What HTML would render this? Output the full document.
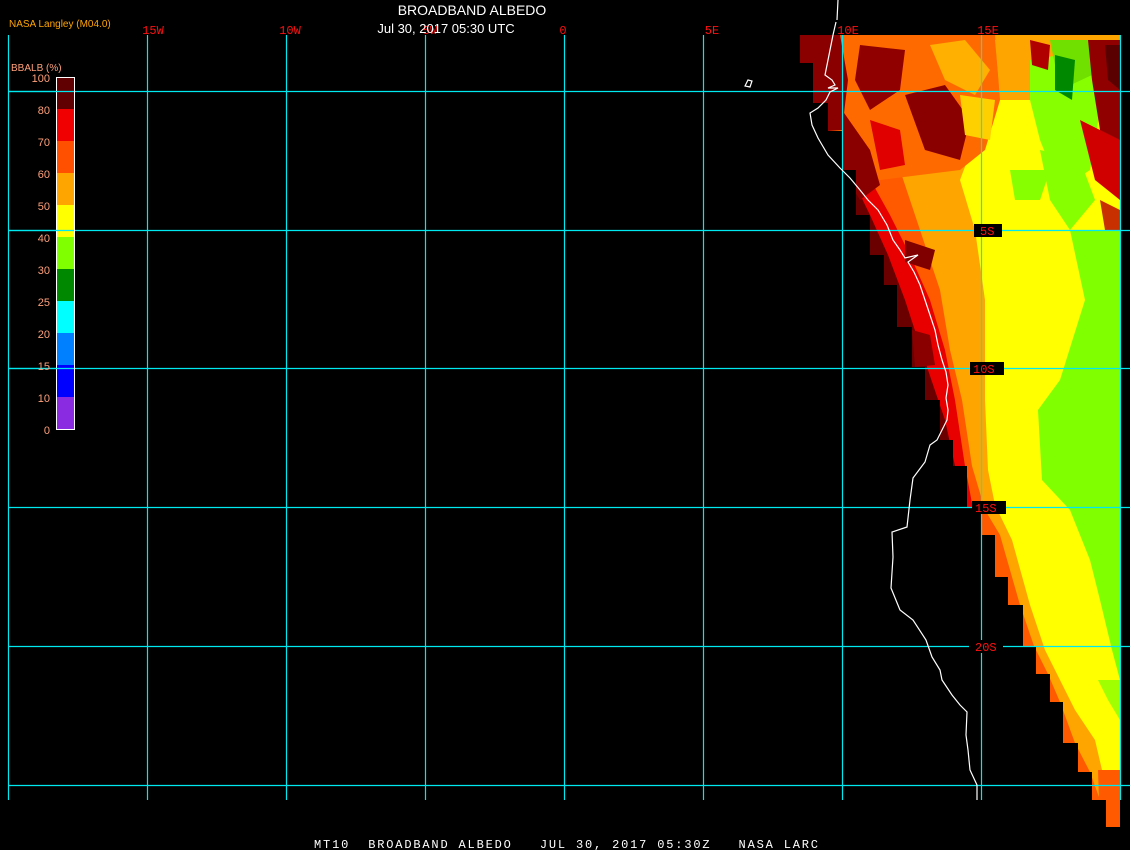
<!DOCTYPE html>
<html><head><meta charset="utf-8"><style>
html,body{margin:0;padding:0;background:#000;width:1130px;height:850px;overflow:hidden}
svg{display:block}
text{font-family:"Liberation Sans",sans-serif}
.m{font-family:"Liberation Mono",monospace}
</style></head><body>
<svg width="1130" height="850" viewBox="0 0 1130 850" xmlns="http://www.w3.org/2000/svg">
<defs>
<clipPath id="land"><path d="M800,35 L1120,35 L1120,827 L1106,827 L1106,800 L1092,800 L1092,772 L1078,772 L1078,743 L1063,743 L1063,702 L1050,702 L1050,674 L1036,674 L1036,646 L1023,646 L1023,605 L1008,605 L1008,577 L995,577 L995,535 L982,535 L982,507 L967,507 L967,466 L953,466 L953,440 L940,440 L940,400 L925,400 L925,367 L912,367 L912,327 L897,327 L897,285 L884,285 L884,255 L870,255 L870,215 L856,215 L856,170 L842,170 L842,131 L828,131 L828,103 L813,103 L813,63 L800,63 Z"/></clipPath>
</defs>
<g clip-path="url(#land)">
<rect x="790" y="30" width="340" height="800" fill="#6a0000"/>
<!-- red -->
<path d="M815,35 L830,110 L848,170 L870,215 L888,255 L905,300 L918,340 L928,370 L945,420 L955,466 L966,507 L960,850 L1130,850 L1130,35Z" fill="#e80000"/>
<!-- orange -->
<path d="M840,35 L845,100 L865,170 L890,215 L910,255 L930,300 L945,350 L955,400 L965,466 L978,535 L978,850 L1130,850 L1130,35Z" fill="#ff5a00"/>
<!-- amber -->
<path d="M880,35 L885,110 L900,170 L920,230 L940,290 L950,350 L962,400 L972,466 L985,510 L1000,535 L1012,577 L1020,605 L1034,646 L1048,674 L1060,702 L1075,743 L1090,772 L1100,800 L1130,800 L1130,35Z" fill="#ffa500"/>
<!-- yellow -->
<path d="M990,100 L960,180 L975,230 L985,300 L985,400 L988,470 L995,505 L1012,540 L1030,605 L1045,650 L1060,680 L1075,710 L1095,740 L1102,770 L1130,770 L1130,100Z" fill="#ffff00"/>
<!-- top mottled -->
<path d="M800,35 L995,35 L1000,100 L985,150 L960,170 L920,175 L880,180 L840,160 L810,110Z" fill="#ff6a00"/>
<path d="M800,35 L840,35 L848,80 L842,130 L828,131 L813,103 L800,63Z" fill="#8a0000"/>
<path d="M842,110 L870,150 L880,185 L860,200 L842,170Z" fill="#8a0000"/>
<path d="M860,45 L905,50 L900,90 L870,110 L855,80Z" fill="#900000"/>
<path d="M905,95 L945,85 L970,120 L960,160 L925,150Z" fill="#8a0000"/>
<path d="M930,45 L965,40 L990,70 L975,95 L945,80Z" fill="#ffb000"/>
<path d="M870,120 L900,130 L905,165 L880,170Z" fill="#e00000"/>
<path d="M960,95 L995,100 L990,140 L965,135Z" fill="#ffd000"/>
<path d="M995,40 L1040,40 L1035,90 L1000,95Z" fill="#ffa500"/>
<path d="M1030,60 L1060,55 L1090,70 L1100,110 L1090,170 L1060,190 L1040,140 L1030,100Z" fill="#88ff00"/>
<path d="M1050,40 L1088,40 L1092,75 L1060,90Z" fill="#70e000"/>
<path d="M1055,55 L1075,60 L1072,100 L1055,90Z" fill="#008800"/>
<path d="M1088,40 L1120,40 L1120,170 L1100,130 L1092,80Z" fill="#900000"/>
<path d="M1105,45 L1120,45 L1120,90 L1108,80Z" fill="#5a0000"/>
<path d="M1030,40 L1050,45 L1048,70 L1032,65Z" fill="#b00000"/>
<path d="M1080,120 L1120,140 L1120,200 L1095,180Z" fill="#d00000"/>
<path d="M1100,200 L1120,210 L1120,280 L1110,260Z" fill="#c83000"/>
<path d="M1040,150 L1080,160 L1095,200 L1070,230 L1050,200Z" fill="#88ff00"/>
<path d="M1010,170 L1050,170 L1040,200 L1015,200Z" fill="#88ff00"/>
<path d="M905,240 L935,250 L930,270 L905,262Z" fill="#800000"/>
<path d="M912,330 L930,335 L935,365 L915,367Z" fill="#8a0000"/>
<!-- greens -->
<path d="M1070,230 L1120,230 L1120,500 L1090,560 L1070,510 L1042,480 L1038,410 L1060,380 L1085,300Z" fill="#80ff00"/>
<path d="M1080,490 L1120,490 L1120,680 L1112,650 L1100,600 L1090,560Z" fill="#80ff00"/>
<path d="M1098,680 L1120,680 L1120,720 L1108,700Z" fill="#a0ff00"/>
<path d="M1098,770 L1120,770 L1120,830 L1100,830Z" fill="#ff5a00"/>
</g>
<!-- grid -->
<g stroke="#00e8f0" stroke-width="1.2" fill="none">
<path d="M8.5,35V800M147.5,35V800M286.5,35V800M425.5,35V800M564.5,35V800M703.5,35V800M842.5,35V800M981.5,35V800M1120.5,35V800"/>
<path d="M8,91.5H1130M8,230.5H1130M8,368.5H1130M8,507.5H1130M8,646.5H1130M8,785.5H1130"/>
</g>
<!-- coastline -->
<g stroke="#fff" stroke-width="1.2" fill="none">
<path d="M838,0 L837,20 M836,22 L833,35 L830,50 L828,60 L825,75 L832,80 L835,85 L828,88 L838,88 L830,92 L826,100 L818,108 L810,113 L812,125 L818,138 L828,155 L840,168 L850,178 L860,190 L868,200 L878,210 L887,225 L893,240 L900,250 L905,258 L918,255 L908,262 L914,272 L920,285 L925,300 L930,315 L935,330 L938,345 L942,360 L946,372 L948,385 L946,398 L948,410 L947,420 L937,440 L930,445 L925,462 L913,478 L910,500 L907,527 L892,532 L893,557 L891,588 L900,610 L913,620 L926,640 L932,657 L940,670 L942,680 L952,695 L960,705 L967,712 L966,735 L968,750 L970,770 L977,785 L977,800"/>
<path d="M745,86 L748,80 L752,81 L750,87 Z"/>
</g>
<!-- colorbar -->
<g>
<rect x="56" y="77" width="18" height="32" fill="#600000"/>
<rect x="56" y="109" width="18" height="32" fill="#f00000"/>
<rect x="56" y="141" width="18" height="32" fill="#ff5000"/>
<rect x="56" y="173" width="18" height="32" fill="#ffa500"/>
<rect x="56" y="205" width="18" height="32" fill="#ffff00"/>
<rect x="56" y="237" width="18" height="32" fill="#80ff00"/>
<rect x="56" y="269" width="18" height="32" fill="#008800"/>
<rect x="56" y="301" width="18" height="32" fill="#00ffff"/>
<rect x="56" y="333" width="18" height="32" fill="#0080ff"/>
<rect x="56" y="365" width="18" height="32" fill="#0000ff"/>
<rect x="56" y="397" width="18" height="32" fill="#8a2be2"/>
<rect x="56.5" y="77.5" width="18" height="352" fill="none" stroke="#fff" stroke-width="1"/>
<path d="M8,91.5H74M8,230.5H74M8,368.5H74" stroke="#00e8f0" stroke-width="1.2"/>
</g>
<g fill="#ffa07a" font-size="11" text-anchor="end">
<text x="50" y="82">100</text><text x="50" y="114">80</text><text x="50" y="146">70</text><text x="50" y="178">60</text><text x="50" y="210">50</text><text x="50" y="242">40</text><text x="50" y="274">30</text><text x="50" y="306">25</text><text x="50" y="338">20</text><text x="50" y="370">15</text><text x="50" y="402">10</text><text x="50" y="434">0</text>
</g>
<text x="11" y="71" fill="#ffa07a" font-size="10">BBALB (%)</text>
<text x="9" y="27" fill="#ffa500" font-size="10">NASA Langley (M04.0)</text>
<g fill="#ff1010" font-size="12" text-anchor="middle">
<text x="153" y="34" class="m">15W</text><text x="290" y="34" class="m">10W</text><text x="430" y="34" class="m">5W</text><text x="563" y="34" class="m">0</text><text x="712" y="34" class="m">5E</text><text x="848" y="34" class="m">10E</text><text x="988" y="34" class="m">15E</text>
</g>
<g font-size="12">
<rect x="974" y="224" width="28" height="13" fill="#000"/>
<text x="980" y="235" fill="#ff1010" class="m">5S</text>
<rect x="970" y="362" width="34" height="13" fill="#000"/>
<text x="973" y="373" fill="#ff1010" class="m">10S</text>
<rect x="972" y="501" width="34" height="13" fill="#000"/>
<text x="975" y="512" fill="#ff1010" class="m">15S</text>
<rect x="969" y="640" width="34" height="13" fill="#000"/>
<text x="975" y="651" fill="#ff1010" class="m">20S</text>
</g>
<text x="472" y="15" fill="#fff" font-size="14" text-anchor="middle">BROADBAND ALBEDO</text>
<text x="446" y="33" fill="#fff" font-size="13" text-anchor="middle">Jul 30, 2017 05:30 UTC</text>
<text x="314" y="848" fill="#fff" font-size="12" class="m" textLength="504" xml:space="preserve">MT10  BROADBAND ALBEDO   JUL 30, 2017 05:30Z   NASA LARC</text>
</svg>
</body></html>
